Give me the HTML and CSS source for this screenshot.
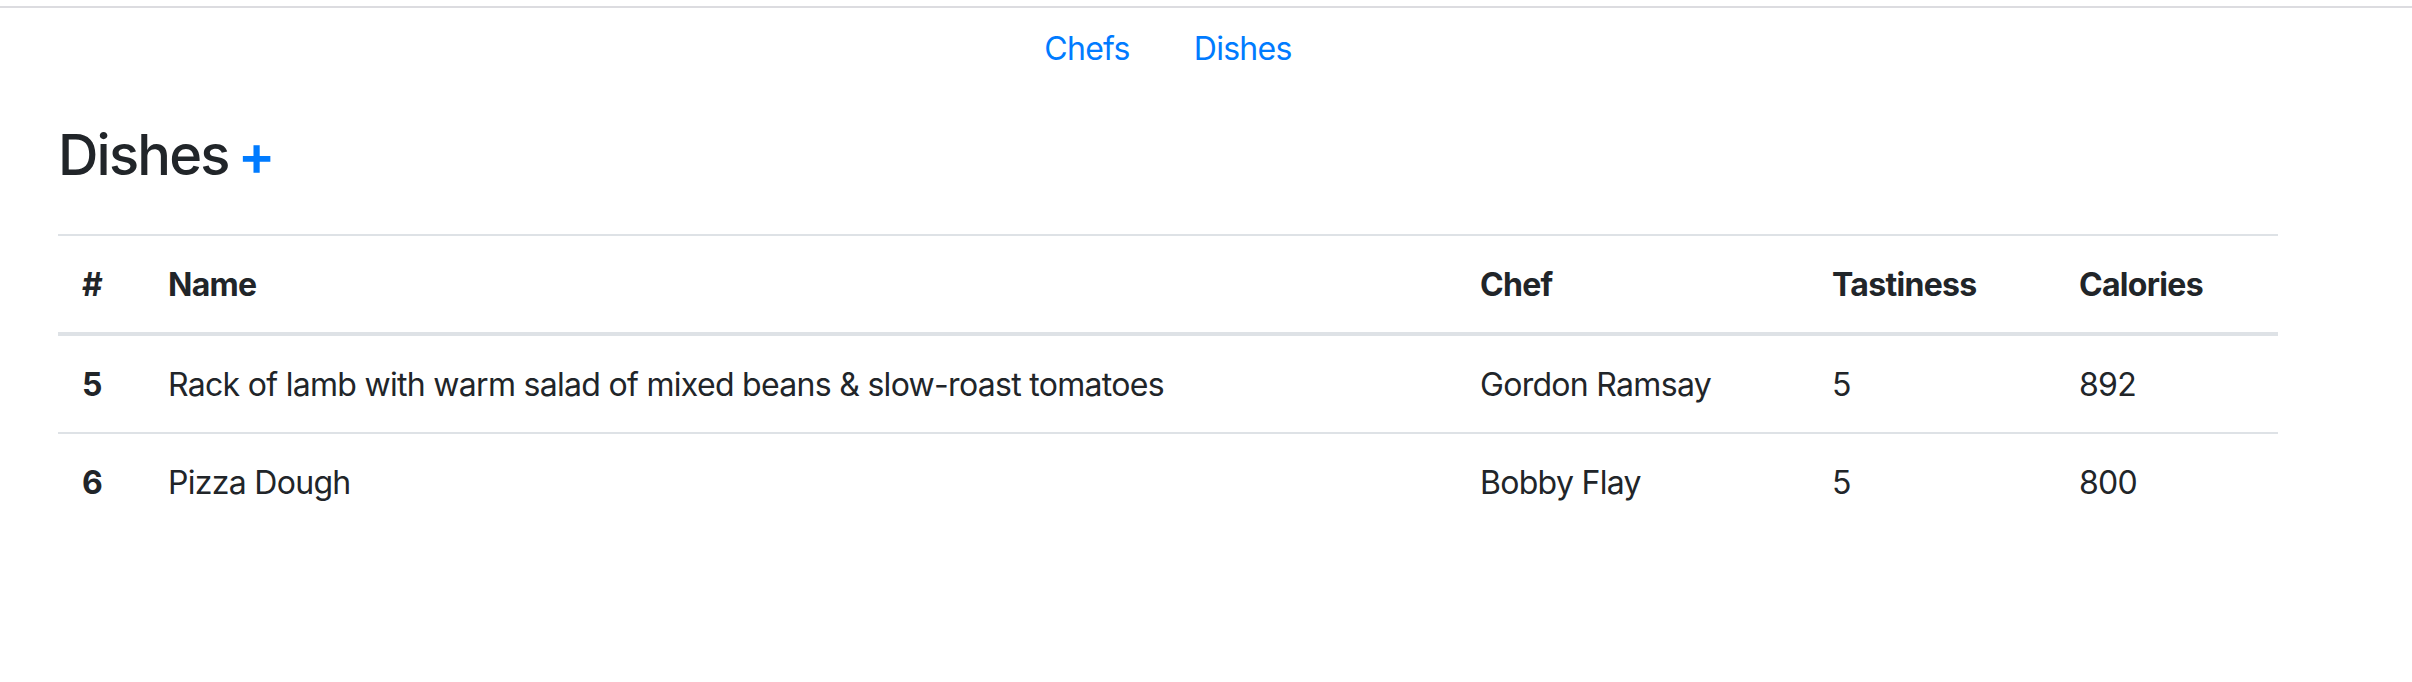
FILE: index.html
```html
<!DOCTYPE html>
<html lang="en">
<head>
<meta charset="utf-8">
<title>Dishes</title>
<link rel="stylesheet" href="styles.css">
</head>
<body>
<div class="topline"></div>
<div class="container">
  <nav class="nav">
    <a class="nav-link" href="#">Chefs</a>
    <a class="nav-link" href="#">Dishes</a>
  </nav>
  <h3 class="title">Dishes <a class="add" href="#">+</a></h3>
  <table class="table">
    <thead>
      <tr>
        <th class="c-id">#</th>
        <th class="c-name">Name</th>
        <th class="c-chef">Chef</th>
        <th class="c-taste">Tastiness</th>
        <th class="c-cal">Calories</th>
      </tr>
    </thead>
    <tbody>
      <tr>
        <th>5</th>
        <td>Rack of lamb with warm salad of mixed beans &amp; slow-roast tomatoes</td>
        <td>Gordon Ramsay</td>
        <td>5</td>
        <td>892</td>
      </tr>
      <tr>
        <th>6</th>
        <td>Pizza Dough</td>
        <td>Bobby Flay</td>
        <td>5</td>
        <td>800</td>
      </tr>
    </tbody>
  </table>
</div>
</body>
</html>
```
FILE: styles.css
```css
html, body {
  margin: 0;
  padding: 0;
  background: #fff;
}
body {
  font-family: Inter, "Noto Sans", "Liberation Sans", sans-serif;
  font-size: 32px;
  line-height: 48px;
  color: #212529;
  letter-spacing: -0.7px;
}
.topline {
  margin-top: 6px;
  height: 2px;
  background: #dcdce0;
}
.container {
  margin-left: 28px;
  width: 2220px;
  padding: 0 30px;
}
.nav {
  display: flex;
  justify-content: center;
}
.nav-link {
  display: block;
  padding: 17px 32px 15px;
  color: #007bff;
  text-decoration: none;
}
.title {
  margin: 34px 0 45px 0;
  font-size: 56px;
  line-height: 67px;
  font-weight: 500;
  letter-spacing: -1.8px;
  word-spacing: -4px;
}
.add {
  color: #007bff;
  text-decoration: none;
  font-weight: 600;
}
.table {
  width: 100%;
  border-collapse: collapse;
  table-layout: fixed;
}
.table th,
.table td {
  padding: 25px 24px 23px;
  text-align: left;
  vertical-align: top;
  border-top: 2px solid #dee2e6;
  font-weight: 400;
}
.table th {
  font-weight: 700;
}
.table thead th {
  border-bottom: 4px solid #dee2e6;
}
.c-id { width: 38px; }
.c-name { width: 1264px; }
.c-chef { width: 304px; }
.c-taste { width: 199px; }
.c-cal { width: 175px; }
```
